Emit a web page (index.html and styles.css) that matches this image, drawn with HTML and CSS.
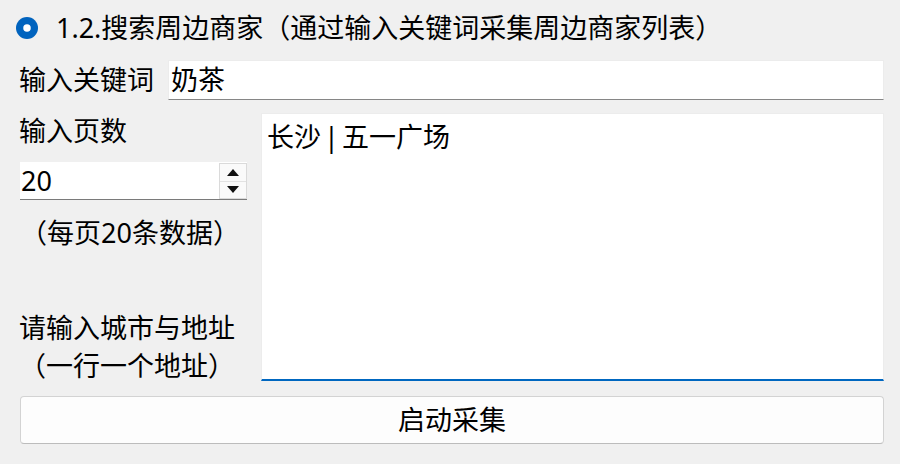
FILE: index.html
```html
<!DOCTYPE html>
<html lang="zh-CN">
<head>
<meta charset="utf-8">
<title>搜索周边商家</title>
<link rel="stylesheet" href="styles.css">
</head>
<body>
<div class="page">
  <div class="title-row">
    <svg class="radio" viewBox="0 0 20 20"><circle cx="10" cy="10" r="10" fill="#0063be"/><circle cx="10" cy="10" r="3.4" fill="#fff"/></svg>
    <span class="title-text">1.2.搜索周边商家（通过输入关键词采集周边商家列表）</span>
  </div>
  <div class="keyword-row">
    <span class="label">输入关键词</span>
    <div class="line-input"><span class="input-text">奶茶</span></div>
  </div>
  <div class="main-row">
    <div class="left-col">
      <div class="label">输入页数</div>
      <div class="spinbox">
        <span class="spin-value">20</span>
        <div class="spin-buttons">
          <div class="spin-btn"><span class="arrow-up"></span></div>
          <div class="spin-btn"><span class="arrow-down"></span></div>
        </div>
      </div>
      <div class="hint">（每页20条数据）</div>
      <div class="address-label">请输入城市与地址<br>（一行一个地址）</div>
    </div>
    <div class="textarea"><span class="area-text">长沙 | 五一广场</span></div>
  </div>
  <div class="start-btn">启动采集</div>
</div>
</body>
</html>
```
FILE: styles.css
```css
html, body {
  margin: 0;
  padding: 0;
  background: #f0f0f0;
}
body {
  width: 900px;
  height: 464px;
  overflow: hidden;
  font-family: "Noto Sans", "Noto Sans CJK SC", sans-serif;
  font-size: 27px;
  color: #000;
}
.page {
  padding: 0 16px 0 18px;
}
.title-row {
  height: 56px;
  display: flex;
  align-items: center;
  gap: 18px;
}
.radio {
  display: block;
  width: 22px;
  height: 22px;
  min-width: 22px;
  flex: 0 0 22px;
  margin-left: -2px;
}
.title-text {
  line-height: 36px;
  white-space: nowrap;
}
.keyword-row {
  margin-top: 4px;
  margin-left: 1px;
  height: 40px;
  display: flex;
  align-items: center;
  gap: 14px;
}
.label {
  line-height: 36px;
  white-space: nowrap;
}
.line-input {
  flex: 1;
  height: 40px;
  box-sizing: border-box;
  background: #fff;
  border: 1px solid #ececec;
  border-bottom: 1px solid #868686;
  display: flex;
  align-items: center;
  padding-left: 2px;
}
.input-text {
  line-height: 36px;
}
.main-row {
  margin-top: 13px;
  margin-left: 1px;
  height: 268px;
  display: flex;
  gap: 14px;
}
.left-col {
  width: 228px;
  flex: none;
  display: flex;
  flex-direction: column;
}
.spinbox {
  margin-top: 13px;
  margin-left: 1px;
  height: 39px;
  box-sizing: border-box;
  background: #fff;
  border-bottom: 1px solid #7a7a7a;
  display: flex;
  align-items: center;
  justify-content: space-between;
  padding-left: 1px;
}
.spin-value {
  line-height: 36px;
}
.spin-buttons {
  width: 28px;
  height: 36px;
  display: flex;
  flex-direction: column;
  border: 1px solid #dadada;
  box-sizing: border-box;
  align-self: flex-start;
  margin-top: 1px;
}
.spin-btn {
  flex: 1;
  background: #fafafa;
  display: flex;
  align-items: center;
  justify-content: center;
}
.spin-btn + .spin-btn {
  border-top: 1px solid #e2e2e2;
}
.arrow-up {
  width: 0;
  height: 0;
  border-left: 6px solid transparent;
  border-right: 6px solid transparent;
  border-bottom: 7px solid #111;
}
.arrow-down {
  width: 0;
  height: 0;
  border-left: 6px solid transparent;
  border-right: 6px solid transparent;
  border-top: 7px solid #111;
}
.hint {
  margin-top: 15px;
  padding-right: 6px;
  line-height: 36px;
  text-align: center;
  white-space: nowrap;
}
.address-label {
  margin-top: 58px;
  line-height: 38px;
  text-align: left;
  white-space: nowrap;
}
.textarea {
  flex: 1;
  box-sizing: border-box;
  background: #fff;
  border: 1px solid #ececec;
  border-bottom: 2px solid #0067c0;
  padding: 4px 5px;
}
.area-text {
  line-height: 36px;
  white-space: nowrap;
  word-spacing: -4px;
}
.start-btn {
  margin-top: 15px;
  margin-left: 2px;
  height: 48px;
  box-sizing: border-box;
  background: #fdfdfd;
  border: 1px solid #d3d3d3;
  border-bottom-color: #bcbcbc;
  border-radius: 4px;
  display: flex;
  align-items: center;
  justify-content: center;
  line-height: 36px;
}
```
